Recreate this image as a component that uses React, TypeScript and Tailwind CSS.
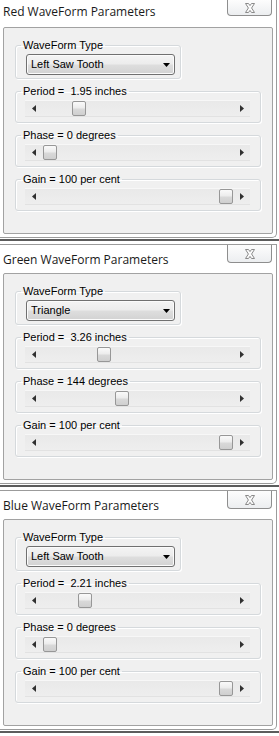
import React from "react";

type Panel = {
  title: string;
  waveType: string;
  period: string;
  periodAt: number;
  phase: string;
  phaseAt: number;
  gainAt: number;
  first: boolean;
};

const panels: Panel[] = [
  {
    title: "Red WaveForm Parameters",
    waveType: "Left Saw Tooth",
    period: "1.95",
    periodAt: 0.165,
    phase: "0",
    phaseAt: 0,
    gainAt: 1,
    first: true,
  },
  {
    title: "Green WaveForm Parameters",
    waveType: "Triangle",
    period: "3.26",
    periodAt: 0.307,
    phase: "144",
    phaseAt: 0.41,
    gainAt: 1,
    first: false,
  },
  {
    title: "Blue WaveForm Parameters",
    waveType: "Left Saw Tooth",
    period: "2.21",
    periodAt: 0.2,
    phase: "0",
    phaseAt: 0,
    gainAt: 1,
    first: false,
  },
];

const CloseGlyph = () => (
  <svg width="12" height="10" viewBox="0 0 12 10">
    <path
      d="M1.5 0.5h3L6 2.6 7.5 0.5h3L7.6 5l2.9 4.5h-3L6 7.4 4.5 9.5h-3L4.4 5z"
      fill="#fbfbfb"
      stroke="#8a8a8a"
      strokeWidth="1"
    />
  </svg>
);

// scrollbar with arrow buttons, thumb sits over the track
const ScrollBar = ({ at }: { at: number }) => (
  <div className="relative ml-[9px] mt-[2px] h-[17px] w-[225px] border-y border-t-[#f7f7f7] border-b-[#e2e2e2] bg-[linear-gradient(#e9e9e9,#eeeeee)]">
    <svg className="absolute left-[7px] top-[4px]" width="4" height="7" viewBox="0 0 4 7">
      <path d="M4 0v7L0 3.5z" fill="#303030" />
    </svg>
    <svg className="absolute right-[6px] top-[4px]" width="4" height="7" viewBox="0 0 4 7">
      <path d="M0 0v7l4-3.5z" fill="#303030" />
    </svg>
    <div
      className="absolute top-[0px] h-[15px] w-[14px] rounded-[2px] border border-[#979797] bg-[linear-gradient(#fafafa,#ececec_45%,#d9d9d9_55%,#cfcfcf)]"
      style={{ left: 18 + at * 176 }}
    />
  </div>
);

const SliderGroup = ({ label, at }: { label: string; at: number }) => (
  <fieldset className="mt-[6px] w-[246px] rounded-[3px] border border-[#d5d9dc] pb-[5px] shadow-[inset_1px_1px_0_#ffffff,1px_1px_0_#ffffff]">
    <legend className="ml-[5px] px-[2px] text-[11px] leading-[13px] text-black whitespace-pre">
      {label}
    </legend>
    <ScrollBar at={at} />
  </fieldset>
);

const WaveWindow = ({ p }: { p: Panel }) => (
  <div className={p.first ? "" : "pt-[3px]"}>
    <div
      className={`mr-[2px] rounded-br-[5px] border-r border-b border-[#9b9b9b] bg-white pb-[3px] ${
        p.first ? "" : "border-t"
      }`}
    >
      <div
        className={`relative ${p.first ? "h-[27px] pt-[4px]" : "h-[28px] pt-[7px]"} pl-[3px]`}
      >
        <div className="font-['Open_Sans',sans-serif] text-[12px] leading-[16px] text-[#1a1a1a]">
          {p.title}
        </div>
        <div
          className={`absolute right-[4px] top-0 flex w-[45px] items-center justify-center rounded-b-[4px] border border-t-0 border-[#8e8e8e] bg-[linear-gradient(#fdfdfd,#eceef0)] ${
            p.first ? "h-[16px]" : "h-[18px]"
          }`}
        >
          <CloseGlyph />
        </div>
      </div>
      <div className="mx-[3px] h-[207px] rounded-[2px] border border-[#a2a2a2] bg-[#f0f0f0] pl-[11px] pt-[11px] font-['Liberation_Sans',Arial,sans-serif]">
        <fieldset className="w-[166px] rounded-[3px] border border-[#d5d9dc] pb-[3px] shadow-[inset_1px_1px_0_#ffffff,1px_1px_0_#ffffff]">
          <legend className="ml-[5px] px-[2px] text-[11px] leading-[13px] text-black">
            WaveForm Type
          </legend>
          <div className="ml-[10px] mt-[2px] flex h-[21px] w-[149px] items-center justify-between rounded-[3px] border border-[#707070] bg-[linear-gradient(#f4f4f4,#ececec_48%,#dedede_52%,#d2d2d2)] pl-[4px] pr-[4px] shadow-[inset_0_0_0_1px_#fbfbfb]">
            <span className="text-[11px] leading-[13px] text-black">{p.waveType}</span>
            <svg width="7" height="4" viewBox="0 0 7 4">
              <path d="M0 0h7L3.5 4z" fill="#000" />
            </svg>
          </div>
        </fieldset>
        <SliderGroup label={`Period =  ${p.period} inches`} at={p.periodAt} />
        <SliderGroup label={`Phase = ${p.phase} degrees`} at={p.phaseAt} />
        <SliderGroup label="Gain = 100 per cent" at={p.gainAt} />
      </div>
    </div>
    <div className="mt-[1px] h-[2px] bg-[#5c5c5c]" />
  </div>
);

export default function App() {
  return (
    <div className="h-[736px] w-[279px] overflow-hidden bg-white">
      {panels.map((p) => (
        <WaveWindow key={p.title} p={p} />
      ))}
    </div>
  );
}
